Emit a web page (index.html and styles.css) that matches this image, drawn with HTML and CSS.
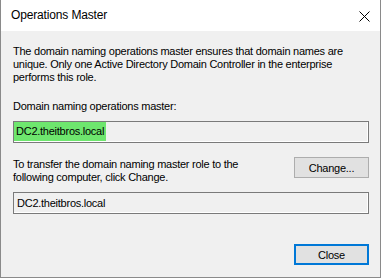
FILE: index.html
```html
<!DOCTYPE html>
<html lang="en">
<head>
    <meta charset="UTF-8">
    <title>Operations Master</title>
    <link rel="stylesheet" href="styles.css">
</head>
<body>
    <div class="window">
        <div class="title-bar">
            <span class="title">Operations Master</span>
            <svg class="close-x" width="11" height="11" viewBox="0 0 11 11">
                <path d="M0.5 0.5 L10.5 10.5 M10.5 0.5 L0.5 10.5" stroke="#000" stroke-width="1" fill="none"/>
            </svg>
        </div>

        <div class="content">
            <p class="intro">The domain naming operations master ensures that domain names are<br>unique. Only one Active Directory Domain Controller in the enterprise<br>performs this role.</p>

            <p class="label">Domain naming operations master:</p>
            <div class="textbox"><span class="selected">DC2.theitbros.local</span></div>

            <div class="transfer-row">
                <p class="transfer-text">To transfer the domain naming master role to the<br>following computer, click Change.</p>
                <button class="btn">Change...</button>
            </div>
            <div class="textbox"><span class="value">DC2.theitbros.local</span></div>

            <div class="footer">
                <button class="btn btn-default">Close</button>
            </div>
        </div>
    </div>
</body>
</html>
```

FILE: styles.css
```css
/* Page */
body {
    margin: 0;
    background: #fff;
    font-family: 'Liberation Sans', Arial, sans-serif;
    font-size: 11px;
    letter-spacing: -0.25px;
    color: #000;
}

/* Dialog window */
.window {
    width: 381px;
    height: 278px;
    box-sizing: border-box;
    border: 1px solid #8a8a8a;
    border-top: none;
    background: #f0f0f0;
    display: flex;
    flex-direction: column;
}

.title-bar {
    height: 31px;
    background: #fff;
    display: flex;
    align-items: center;
    justify-content: space-between;
    padding: 0 10px 0 10px;
}

.title {
    font-size: 12px;
    letter-spacing: -0.15px;
    padding-bottom: 1px;
}

.close-x {
    margin-top: 1px;
}

/* Content */
.content {
    flex-grow: 1;
    padding: 14px 11px 0 12px;
    display: flex;
    flex-direction: column;
}

p {
    margin: 0;
    line-height: 13px;
}

.intro {
    margin-bottom: 16px;
}

.label {
    margin-bottom: 8px;
}

.textbox {
    height: 22px;
    box-sizing: border-box;
    border: 1px solid #7a7a7a;
    box-shadow: inset -1px -1px 0 #fff;
    display: flex;
    align-items: stretch;
    padding: 0 0 1px 0;
}

.textbox .selected {
    background: #6ee66e;
    padding: 3px 2px 0 2px;
    line-height: 13px;
}

.textbox .value {
    padding: 4px 3px 0 3px;
    line-height: 13px;
}

.transfer-row {
    display: flex;
    justify-content: space-between;
    align-items: flex-start;
    margin: 14px 0 8px 0;
}

.transfer-text {
    margin-top: 1px;
}

/* Buttons */
.btn {
    width: 75px;
    height: 21px;
    background: #e1e1e1;
    border: 1px solid #adadad;
    font-family: 'Liberation Sans', Arial, sans-serif;
    font-size: 11px;
    letter-spacing: -0.25px;
    color: #000;
    padding: 0;
}

.btn-default {
    border: 2px solid #0078d7;
}

.footer {
    display: flex;
    justify-content: flex-end;
    margin-top: 30px;
}
```
